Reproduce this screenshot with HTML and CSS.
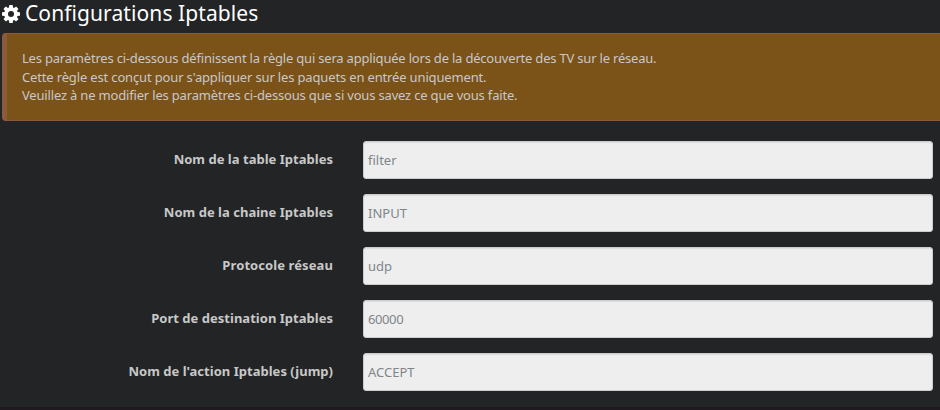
FILE: index.html
```html
<!DOCTYPE html>
<html lang="fr">
<head>
<meta charset="utf-8">
<title>Configurations Iptables</title>
<link rel="stylesheet" href="styles.css">
</head>
<body>
<h1 class="legend"><svg class="gear" viewBox="0 -1536 1536 1536" aria-hidden="true"><path fill-rule="evenodd" d="M1024-768a256 256 0 1 0-512 0 256 256 0 1 0 512 0zM1536-877v222q0 12-8 23t-20 13l-185 28q-19 54-39 91 35 50 107 138 10 12 10 25t-9 23q-27 37-99 108t-94 71q-12 0-26-9l-138-108q-44 23-91 38-16 136-29 186-7 28-36 28H657q-14 0-24.500-8.500T621-30l-28-184q-49-16-90-37L362-144q-10 9-25 9-14 0-25-11-126-114-165-168-7-10-7-23 0-12 8-23 15-21 51-66.500t54-70.500q-27-50-41-99L29-623q-13-2-21-12.500T0-659v-222q0-12 8-23t19-13l186-28q14-46 39-92-40-57-107-138-10-12-10-24 0-10 9-23 26-36 98.500-107.500T337-1401q13 0 26 10l138 107q44-23 91-38 16-136 29-186 7-28 36-28h222q14 0 24.500 8.500T915-1506l28 184q49 16 90 37l142-107q9-9 24-9 13 0 25 10 129 119 165 170 7 8 7 22 0 12-8 23-15 21-51 66.500t-54 70.500q26 50 41 98l183 28q13 2 21 12.500t8 23.500z"/></svg><span>Configurations Iptables</span></h1>
<div class="alert">Les paramètres ci-dessous définissent la règle qui sera appliquée lors de la découverte des TV sur le réseau.<br><span class="rule">Cette règle est conçut pour s'appliquer sur les paquets en entrée uniquement.</span><br><span class="warning">Veuillez à ne modifier les paramètres ci-dessous que si vous savez ce que vous faite.</span></div>
<form class="form">
<label for="table">Nom de la table Iptables</label><input id="table" placeholder="filter">
<label for="chain">Nom de la chaine Iptables</label><input id="chain" placeholder="INPUT">
<label for="proto" class="wide">Protocole réseau</label><input id="proto" placeholder="udp">
<label for="port">Port de destination Iptables</label><input id="port" class="digits" placeholder="60000">
<label for="jump">Nom de l'action Iptables (jump)</label><input id="jump" placeholder="ACCEPT">
</form>
</body>
</html>
```
FILE: styles.css
```css
* { box-sizing: border-box; }
body { margin: 0; height: 410px; overflow: hidden; background: #222425; color: #c8c8c8; font: 13px/18.57px "Noto Sans", sans-serif; border-bottom: 3px solid #1e1a1f; }
.legend { display: flex; align-items: center; gap: 5px; height: 33px; margin: 0; padding: 0 0 6px 2px; color: #fff; font-size: 21px; font-weight: 400; line-height: 27px; letter-spacing: .09px; }
.gear { width: 18px; height: 18px; fill: #fff; }
.alert { height: 88px; margin-left: 2px; padding: 15px; border: 1px solid #8b5a3c; border-left: 5px solid #8b5a3c; border-right: 0; border-radius: 4px 0 0 4px; background: #7b5217; letter-spacing: -.2px; white-space: nowrap; }
.rule { letter-spacing: -.155px; }
.warning { letter-spacing: -.18px; }
.form { display: grid; grid-template-columns: 333px 570px; grid-auto-rows: 38px; column-gap: 30px; row-gap: 15px; margin: 20px 0 0; }
.form label { padding-top: 9px; text-align: right; font-weight: 700; letter-spacing: .02px; }
.form .wide { letter-spacing: .09px; }
.form input { width: 570px; height: 38px; padding: 6px 4px; border: 1px solid #ccc; border-radius: 3px; background: #eee; box-shadow: inset 0 1px 1px rgba(0, 0, 0, .075); font: 13px "Noto Sans", sans-serif; }
.form input::placeholder { color: #80858a; opacity: 1; }
.form .digits { letter-spacing: -.4px; }
```
